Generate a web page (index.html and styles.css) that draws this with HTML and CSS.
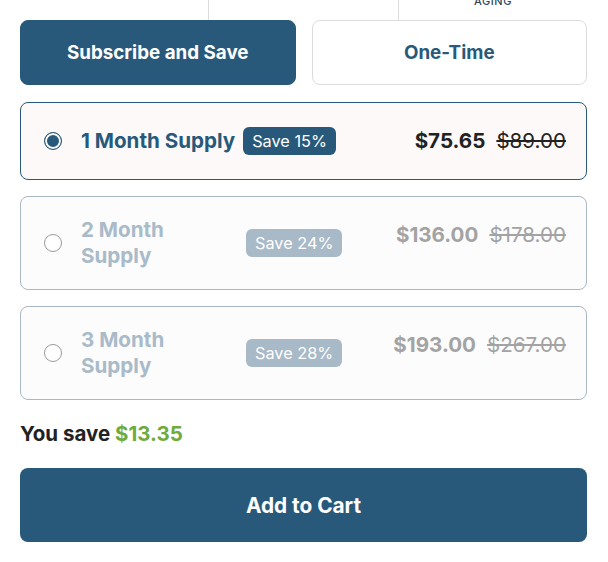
FILE: index.html
```html
<!DOCTYPE html>
<html lang="en">
<head>
<meta charset="utf-8">
<title>Subscribe</title>
<link rel="stylesheet" href="styles.css">
</head>
<body>
<div class="wrap">
  <div class="tabs-top">
    <div class="tt-cell"></div>
    <div class="tt-cell"></div>
    <div class="tt-cell"><span class="tt-label">AGING</span></div>
  </div>
  <div class="mode">
    <button class="mode-btn active">Subscribe and Save</button>
    <button class="mode-btn">One-Time</button>
  </div>
  <div class="options">
    <div class="opt selected">
      <span class="radio on"></span>
      <span class="opt-label">1 Month Supply</span>
      <span class="badge">Save 15%</span>
      <span class="price"><b>$75.65</b><s>$89.00</s></span>
    </div>
    <div class="opt off">
      <span class="radio"></span>
      <span class="opt-label narrow">2 Month Supply</span>
      <span class="badge">Save 24%</span>
      <span class="price"><b>$136.00</b><s>$178.00</s></span>
    </div>
    <div class="opt off">
      <span class="radio"></span>
      <span class="opt-label narrow">3 Month Supply</span>
      <span class="badge">Save 28%</span>
      <span class="price"><b>$193.00</b><s>$267.00</s></span>
    </div>
  </div>
  <p class="saving">You save <span class="green">$13.35</span></p>
  <button class="cart">Add to Cart</button>
</div>
</body>
</html>
```

FILE: styles.css
```css
* { box-sizing: border-box; }
html, body { margin: 0; padding: 0; background: #fff; }
body { font-family: Inter, "Noto Sans", sans-serif; color: #222; }
.wrap { width: 567px; margin-left: 20px; }

.tabs-top { display: grid; grid-template-columns: 188px 190px 189px; height: 20px; overflow: hidden; }
.tt-cell { border-left: 1px solid #dcdcdc; text-align: center; }
.tt-cell:first-child { border-left: none; }
.tt-label { display: block; margin-top: -6px; font-size: 11px; line-height: 14px; letter-spacing: 0.6px; color: #2b4a5e; font-weight: 500; }

.mode { display: grid; grid-template-columns: 1fr 1fr; gap: 16px; }
.mode-btn { height: 65px; border-radius: 8px; border: 1px solid #dcdcdc; background: #fff; color: #28597a; font-family: Inter, sans-serif; font-weight: 700; font-size: 18.8px; cursor: pointer; }
.mode-btn.active { background: #28597a; border-color: #28597a; color: #fff; }

.options { display: flex; flex-direction: column; gap: 16px; margin-top: 17px; }
.opt { display: flex; align-items: center; border: 1px solid #a9b8c3; border-radius: 8px; background: #fcfcfc; padding: 20px 20px 20px 23px; min-height: 78px; }
.opt.selected { border-color: #28597a; background: #fcf9f8; }
.radio { width: 18px; height: 18px; border-radius: 50%; border: 1px solid #9a9a9a; background: #fff; flex: none; }
.radio.on { border: 1.5px solid #28597a; box-shadow: inset 0 0 0 2px #fff; background: #28597a; }
.opt-label { margin-left: 19px; font-size: 20.6px; font-weight: 700; line-height: 26px; color: #28597a; white-space: nowrap; }
.opt-label.narrow { width: 140px; white-space: normal; flex: none; }
.off .opt-label { color: #a9bac8; }
.badge { margin-left: 8px; height: 28px; line-height: 28px; padding: 0 9px; border-radius: 6px; background: #28597a; color: #fff; font-size: 16.3px; font-weight: 400; }
.off .badge { background: #a8b9c7; margin-left: 25px; }
.price { margin-left: auto; align-self: flex-start; line-height: 36px; font-size: 20.6px; white-space: nowrap; }
.opt.selected .price { align-self: center; }
.price b { font-weight: 700; color: #222; }
.price s { margin-left: 11px; color: #222; font-weight: 400; }
.off .price b, .off .price s { color: #a3a3a3; }

.saving { margin: 22px 0 0; font-size: 20.5px; font-weight: 700; line-height: 24px; color: #222; }
.green { color: #6fab3b; }
.cart { display: block; width: 100%; height: 74px; margin-top: 22px; border: none; border-radius: 8px; background: #28597a; color: #fff; font-family: Inter, sans-serif; font-size: 20.8px; font-weight: 700; cursor: pointer; }
```
